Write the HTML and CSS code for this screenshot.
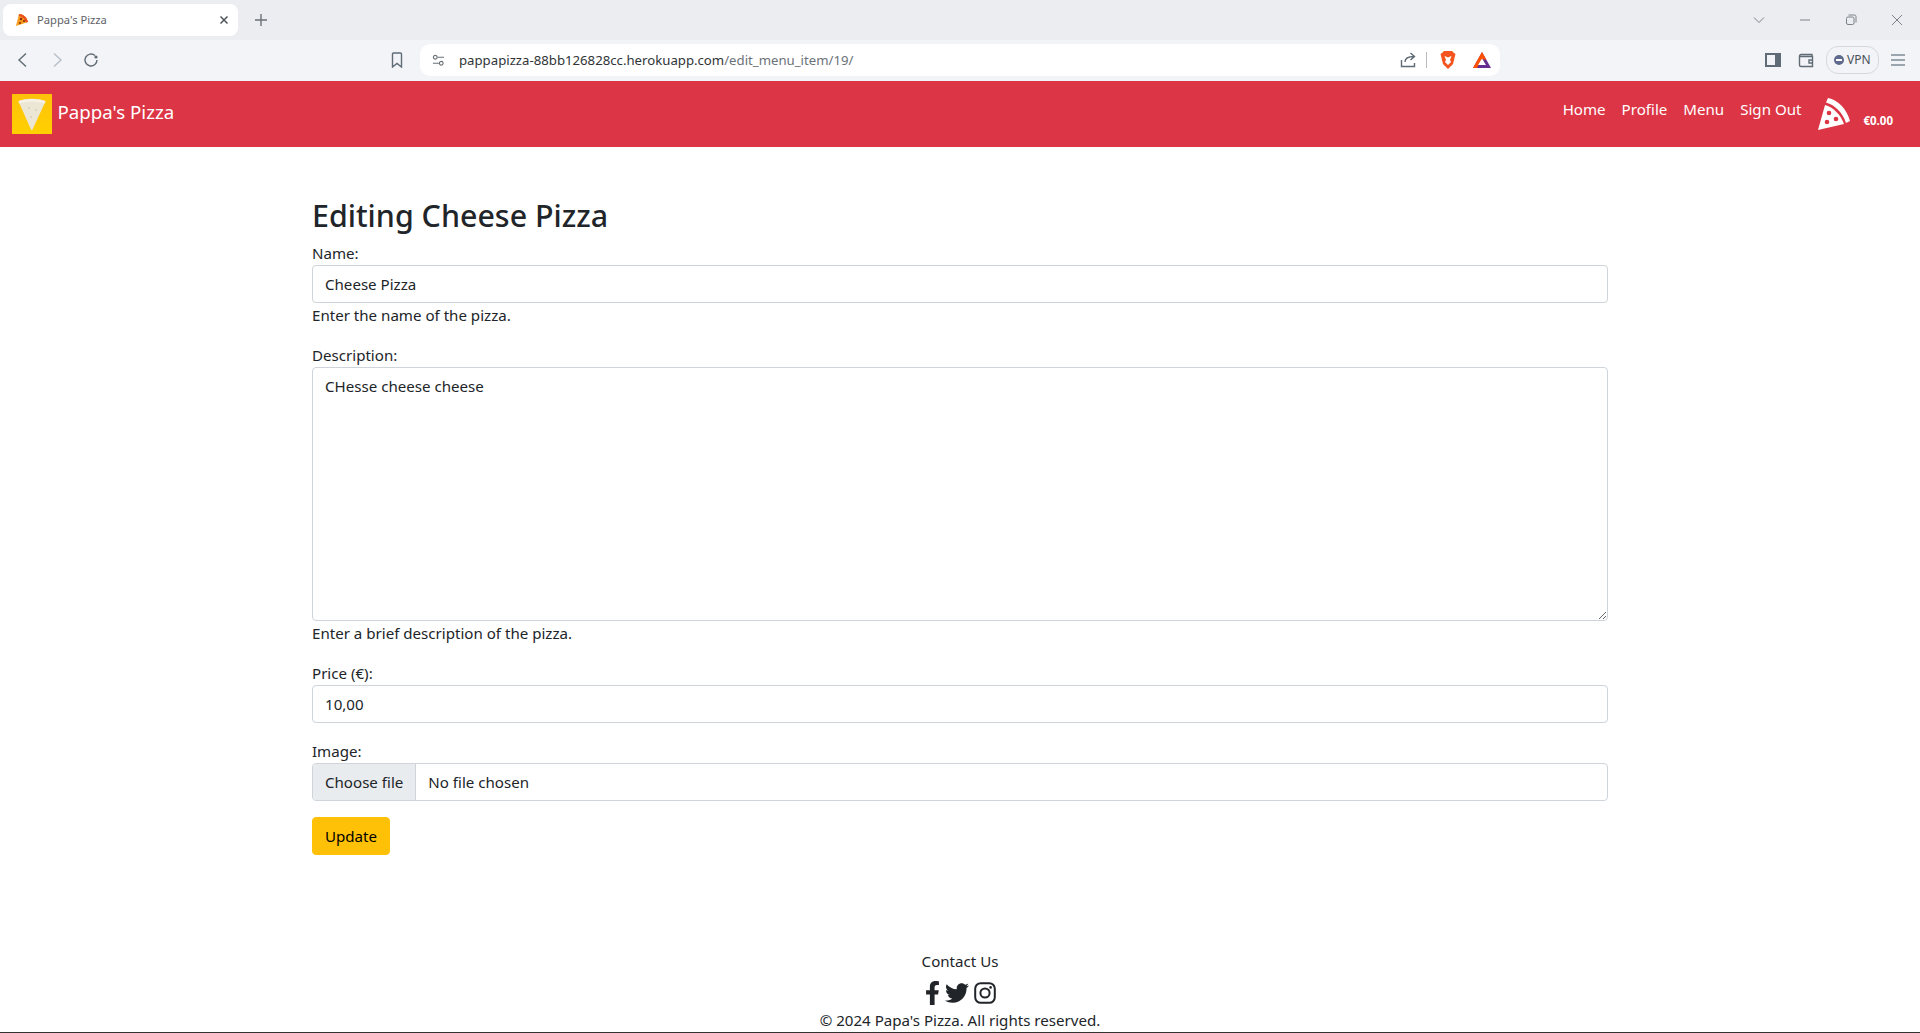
FILE: index.html
```html
<!DOCTYPE html>
<html lang="en">
<head>
  <meta charset="UTF-8" />
  <title>Pappa's Pizza</title>
  <link rel="stylesheet" href="styles.css">
</head>
<body>
  <div class="tabstrip">
    <div class="tab">
      <svg class="favicon" viewBox="0 0 14 14"><path d="M1 13 4 1c4 0 8 3 9 8z" fill="#f59b1c"/><path d="M4 1c4 0 8 3 9 8l-2 .6C10 6 7.500 3.500 3.700 2.700z" fill="#e8501f"/><circle cx="6" cy="6" r="1.200" fill="#8e2a12"/><circle cx="9" cy="8" r="1.100" fill="#8e2a12"/><circle cx="5" cy="10" r="1" fill="#8e2a12"/></svg>
      <span class="tab-title">Pappa's Pizza</span>
      <svg class="tab-close" viewBox="0 0 10 10"><path d="M1.500 1.500l7 7M8.500 1.500l-7 7"/></svg>
    </div>
    <svg class="new-tab" viewBox="0 0 12 12"><path d="M6 0v12M0 6h12"/></svg>
    <div class="window-controls">
      <svg class="win-icon" viewBox="0 0 12 12"><path d="M1 3.500 6 8.500l5-5"/></svg>
      <svg class="win-icon" viewBox="0 0 12 12"><path d="M1 6h10"/></svg>
      <svg class="win-icon" viewBox="0 0 12 12"><rect x="1.500" y="3" width="7.500" height="7.500" rx="1.500"/><path d="M3.500 1h6a1.500 1.500 0 0 1 1.500 1.500v6"/></svg>
      <svg class="win-icon" viewBox="0 0 12 12"><path d="M1 1l10 10M11 1 1 11"/></svg>
    </div>
  </div>

  <div class="toolbar">
    <svg class="tool-icon" viewBox="0 0 16 16"><path d="M11 1.500 4 8l7 6.500"/></svg>
    <svg class="tool-icon muted" viewBox="0 0 16 16"><path d="M5 1.500 12 8l-7 6.500"/></svg>
    <svg class="tool-icon" viewBox="0 0 16 16"><path d="M14 8a6 6 0 1 1-2-4.500"/><circle cx="13" cy="5" r="1.600" fill="#5f6b75" stroke="none"/></svg>
    <svg class="tool-icon bookmark" viewBox="0 0 16 16"><path d="M3.500 2a1 1 0 0 1 1-1h7a1 1 0 0 1 1 1v13L8 11.500 3.500 15z"/></svg>
    <div class="omnibox">
      <svg class="site-icon" viewBox="0 0 14 14"><circle cx="3.500" cy="3.500" r="2"/><path d="M6 3.500h7M1 10h6.500"/><circle cx="10" cy="10" r="2"/></svg>
      <span class="url">pappapizza-88bb126828cc.herokuapp.com<span class="url-path">/edit_menu_item/19/</span></span>
      <svg class="tool-icon share" viewBox="0 0 16 16"><path d="M1.500 8v6.500h13V11M5 10c0-3.500 3-5.500 9-5.500M10.500 1l4 3.500-4 3.500"/></svg>
      <span class="omni-sep"></span>
      <svg class="brave" viewBox="0 0 16 18"><path d="M4 0h8l2 2 1.500 1-1 4-1.500 6-3 3-2 2-2-2-3-3L1.500 7l-1-4L2 2z" fill="#f4551e"/><path d="M4.500 5 7 6l1 .4L9 6l2.500-1L10 9l1 2-3 3-3-3 1-2z" fill="#fff"/></svg>
      <svg class="bat" viewBox="0 0 18 16"><path d="M9 0l9 16H0z" fill="#662d91"/><path d="M9 0 0 16h4L9 7z" fill="#ff5000"/><path d="M9 0l4.500 8L9 7z" fill="#ff5000"/><path d="M9 6.500 13 13H5z" fill="#fff"/></svg>
    </div>
    <svg class="tool-icon sidebar" viewBox="0 0 16 16"><rect x="1" y="2" width="14" height="12" fill="none"/><rect x="10" y="2" width="5" height="12" fill="#5f6b75" stroke="none"/></svg>
    <svg class="tool-icon wallet" viewBox="0 0 16 16"><path d="M14 4V2.500H3A1.500 1.500 0 0 0 1.500 4v9A1.500 1.500 0 0 0 3 14.500h11.500v-10H2"/><path d="M15 8h-4v3h4"/></svg>
    <div class="vpn"><span class="vpn-dot"></span>VPN</div>
    <svg class="tool-icon menu-icon" viewBox="0 0 16 16"><path d="M1 3h14M1 8h14M1 13h14"/></svg>
  </div>

  <nav class="navbar">
    <a class="brand" href="#">
      <svg class="logo" viewBox="0 0 40 40">
        <defs><linearGradient id="logoBg" x1="0" y1="0" x2="0" y2="1"><stop offset="0" stop-color="#ffc20a"/><stop offset="1" stop-color="#ffd000"/></linearGradient></defs>
        <rect width="40" height="40" fill="url(#logoBg)"/>
        <path d="M7 8.500c8-3 18-3 26 0L20.500 35.500q-.8 1-1.500 0z" fill="#ece6d5"/>
        <path d="M6.500 7c8-3 19-3 27 0l-.500 2.500c-8-2.500-18-2.500-26 0z" fill="#f5f1e6"/>
        <circle cx="17" cy="14" r=".8" fill="#c9bfa8"/><circle cx="24" cy="16" r=".8" fill="#c9bfa8"/><circle cx="19" cy="23" r=".8" fill="#c9bfa8"/>
      </svg>
      <span>Pappa's Pizza</span>
    </a>
    <ul class="nav-links">
      <li><a href="#">Home</a></li>
      <li><a href="#">Profile</a></li>
      <li><a href="#">Menu</a></li>
      <li><a href="#">Sign Out</a></li>
    </ul>
    <a class="cart" href="#">
      <svg class="cart-icon" viewBox="0 0 32 32">
        <path d="M10 0C20 2 29 11 32 23l-4 2C25 15 17 7 8 4.500z" fill="#fff"/>
        <path d="M0 32 7 7c8 2 16 10 19 19z" fill="#fff"/>
        <circle cx="11" cy="15" r="2.300" fill="#dc3545"/><circle cx="18" cy="21" r="2.300" fill="#dc3545"/><circle cx="9" cy="24" r="2.300" fill="#dc3545"/>
      </svg>
      <strong class="cart-total">€0.00</strong>
    </a>
  </nav>

  <main class="container">
    <h2>Editing Cheese Pizza</h2>
    <form>
      <div class="field">
        <label for="name">Name:</label>
        <input class="form-control" type="text" id="name" value="Cheese Pizza" />
        <small class="help">Enter the name of the pizza.</small>
      </div>
      <div class="field">
        <label for="description">Description:</label>
        <textarea class="form-control desc" id="description">CHesse cheese cheese</textarea>
        <small class="help">Enter a brief description of the pizza.</small>
      </div>
      <div class="field">
        <label for="price">Price (€):</label>
        <input class="form-control" type="text" id="price" value="10,00" />
      </div>
      <div class="field">
        <label for="image">Image:</label>
        <div class="form-control file" id="image">
          <span class="file-btn">Choose file</span>
          <span>No file chosen</span>
        </div>
      </div>
      <button class="btn-update" type="submit">Update</button>
    </form>
  </main>

  <footer class="footer">
    <p>Contact Us</p>
    <div class="socials">
      <svg class="social-f" viewBox="0 0 320 512"><path d="M279.14 288l14.22-92.66h-88.91v-60.13c0-25.35 12.42-50.06 52.24-50.06h40.42V6.26S260.43 0 225.36 0c-73.22 0-121.08 44.38-121.08 124.72v70.62H22.89V288h81.39v224h100.17V288z"/></svg>
      <svg class="social-t" viewBox="0 0 512 512"><path d="M459.37 151.716c.325 4.548.325 9.097.325 13.645 0 138.72-105.583 298.558-298.558 298.558-59.452 0-114.68-17.219-161.137-47.106 8.447.974 16.568 1.299 25.34 1.299 49.055 0 94.213-16.568 130.274-44.832-46.132-.975-84.792-31.188-98.112-72.772 6.498.974 12.995 1.624 19.818 1.624 9.421 0 18.843-1.3 27.614-3.573-48.081-9.747-84.143-51.98-84.143-102.985v-1.299c13.969 7.797 30.214 12.67 47.431 13.319-28.264-18.843-46.781-51.005-46.781-87.391 0-19.492 5.197-37.36 14.294-52.954 51.655 63.675 129.3 105.258 216.365 109.807-1.624-7.797-2.599-15.918-2.599-24.04 0-57.828 46.782-104.934 104.934-104.934 30.213 0 57.502 12.67 76.67 33.137 23.715-4.548 46.456-13.32 66.599-25.34-7.798 24.366-24.366 44.833-46.132 57.827 21.117-2.273 41.584-8.122 60.426-16.243-14.292 20.791-32.161 39.308-52.628 54.253z"/></svg>
      <svg class="social-i" viewBox="0 0 22 22"><rect x="1.200" y="1.200" width="19.600" height="19.600" rx="5.500"/><circle cx="11" cy="11" r="4.600"/><circle class="dot" cx="16.600" cy="5.400" r="1.300"/></svg>
    </div>
    <p>© 2024 Papa's Pizza. All rights reserved.</p>
  </footer>
</body>
</html>
```

FILE: styles.css
```css
* {
  box-sizing: border-box;
}
html, body {
  height: 100%;
}
body {
  margin: 0;
  height: 1033px;
  overflow: hidden;
  font-family: "Noto Sans", "Open Sans", sans-serif;
  font-size: 15.1px;
  line-height: 24px;
  color: #212529;
  background: #fff;
  border-bottom: 1px solid #333;
}

/* browser chrome */
.tabstrip {
  height: 40px;
  background: #ebedf1;
  display: flex;
  align-items: center;
  padding-left: 3px;
}
.tab {
  width: 235px;
  height: 32px;
  background: #fff;
  border-radius: 8px;
  display: flex;
  align-items: center;
  padding: 0 12px;
}
.favicon {
  width: 14px;
  height: 14px;
}
.tab-title {
  margin-left: 8px;
  font-size: 11.2px;
  color: #5f6368;
  flex: 1;
}
.tab-close {
  width: 10px;
  height: 10px;
  margin-right: -3px;
  fill: none;
  stroke: #4f5458;
  stroke-width: 1.5;
}
.new-tab {
  width: 12px;
  height: 12px;
  margin-left: 17px;
  fill: none;
  stroke: #6b7278;
  stroke-width: 1.4;
}
.window-controls {
  margin-left: auto;
  display: flex;
  gap: 34px;
  padding-right: 17px;
}
.win-icon {
  width: 12px;
  height: 12px;
  fill: none;
  stroke: #7c8388;
  stroke-width: 1;
}

.toolbar {
  height: 41px;
  background: #f3f4f7;
  display: flex;
  align-items: center;
  padding: 0 0 1px 15px;
}
.tool-icon {
  width: 16px;
  height: 16px;
  fill: none;
  stroke: #5f6b75;
  stroke-width: 1.4;
  margin-right: 18px;
  flex: none;
}
.tool-icon.muted {
  stroke: #b6bfc7;
}
.tool-icon.bookmark {
  margin-left: 272px;
  margin-right: 15px;
}
.omnibox {
  width: 1080px;
  height: 32px;
  background: #fff;
  border-radius: 10px;
  display: flex;
  align-items: center;
  padding-left: 12px;
  flex: none;
}
.site-icon {
  width: 13px;
  height: 13px;
  fill: none;
  stroke: #6b7278;
  stroke-width: 1.2;
  flex: none;
}
.url {
  margin-left: 14px;
  font-size: 13.200px;
  color: #2f3437;
  flex: 1;
}
.url-path {
  color: #6b7278;
}
.share {
  margin-right: 10px;
}
.omni-sep {
  width: 1px;
  height: 16px;
  background: #b8bcc0;
  margin-right: 13px;
}
.brave {
  width: 16px;
  height: 18px;
  margin-right: 17px;
}
.bat {
  width: 18px;
  height: 16px;
  margin-right: 9px;
}
.sidebar {
  margin-left: 265px;
  margin-right: 17px;
  stroke-width: 2;
}
.wallet {
  margin-right: 0;
}
.vpn {
  margin-left: 12px;
  width: 53px;
  height: 28px;
  border: 1px solid #d5d9dd;
  border-radius: 12px;
  font-size: 12px;
  color: #4a5157;
  display: flex;
  align-items: center;
  padding-left: 7px;
  gap: 3px;
}
.vpn-dot {
  width: 10px;
  height: 10px;
  border-radius: 50%;
  background: linear-gradient(#fff, #fff) center / 6px 2px no-repeat #5f6b8c;
}
.menu-icon {
  margin: 0 0 0 11px;
  stroke: #7d8a96;
}

/* site */
.navbar {
  height: 66px;
  background: #dc3545;
  display: flex;
  align-items: center;
  padding: 0 12px;
}
.navbar a {
  color: #fff;
  text-decoration: none;
}
.brand {
  display: flex;
  align-items: center;
  font-size: 18.700px;
  gap: 5.500px;
}
.brand span {
  margin-bottom: 5px;
}
.logo {
  width: 40px;
  height: 40px;
}
.nav-links {
  list-style: none;
  display: flex;
  gap: 16px;
  margin: 0 0 10px auto;
  padding: 0;
}
.cart {
  display: flex;
  align-items: flex-end;
  margin-left: 17px;
  margin-right: 15px;
  gap: 13px;
}
.cart-icon {
  width: 32px;
  height: 32px;
}
.cart-total {
  font-size: 11.500px;
  line-height: 18px;
}

.container {
  width: 1320px;
  margin: 0 auto;
  padding: 48px 12px 0;
}
h2 {
  font-size: 30.400px;
  font-weight: 500;
  line-height: 38.400px;
  margin: 0 0 8px;
  padding-top: 2px;
  height: 38.400px;
}
label {
  display: block;
}
.field {
  margin-bottom: 16px;
}
.help {
  display: block;
  font-size: 15.100px;
}
.form-control {
  display: block;
  width: 100%;
  height: 38px;
  padding: 6px 12px;
  font: inherit;
  color: #212529;
  background: #fff;
  border: 1px solid #ced4da;
  border-radius: 4px;
}
.desc {
  height: 254px;
}
.file {
  display: flex;
  overflow: hidden;
}
.file-btn {
  background: #e9ecef;
  padding: 6px 12px;
  margin: -6px 12px -6px -12px;
  border-right: 1px solid #ced4da;
}
.btn-update {
  height: 38px;
  padding: 6px 12px;
  font: inherit;
  color: #000;
  background: #ffc107;
  border: 1px solid #ffc107;
  border-radius: 4px;
}

.footer {
  margin-top: 94px;
  text-align: center;
}
.footer p {
  margin: 0;
}
.socials {
  height: 35px;
  padding-top: 4px;
  display: flex;
  justify-content: center;
  align-items: center;
  gap: 5px;
}
.socials svg {
  height: 24px;
  fill: #212529;
}
.social-f {
  width: 15px;
}
.social-t {
  width: 24px;
}
.social-i {
  width: 22px;
}
.socials .social-i {
  fill: none;
  stroke: #212529;
  stroke-width: 2;
}
.socials .social-i .dot {
  fill: #212529;
  stroke: none;
}
```
